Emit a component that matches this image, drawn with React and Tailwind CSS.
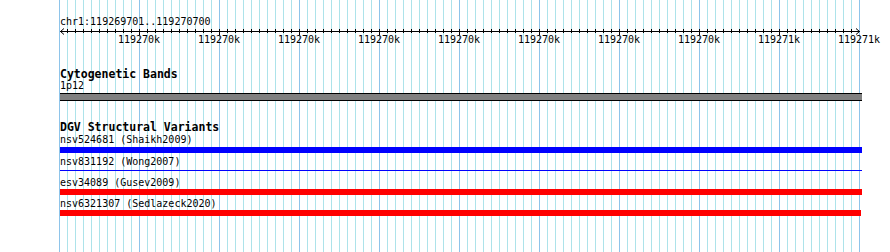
import React from "react";

const MINOR = "#ade3ea";
const MAJOR = "#8ec4ea";

function Grid() {
  const lines = [];
  for (let i = 0; i <= 100; i++) {
    const x = 59 + i * 8;
    const major = i % 10 === 0;
    lines.push(
      <rect key={i} x={x} y={0} width={1} height={252} fill={major ? MAJOR : MINOR} />
    );
  }
  return (
    <svg
      className="absolute left-0 top-0"
      width={890}
      height={252}
      shapeRendering="crispEdges"
    >
      {lines}
    </svg>
  );
}

function Ruler() {
  const ticks = [];
  for (let i = 1; i < 100; i++) {
    const x = i * 8;
    const major = i % 10 === 0;
    ticks.push(
      <rect key={i} x={x} y={2} width={1} height={major ? 6 : 4} fill="#000" />
    );
  }
  return (
    <svg width={802} height={8} shapeRendering="crispEdges" className="block">
      <rect x={1} y={4} width={800} height={1} fill="#000" />
      <polyline points="5,1.5 1.5,4.5 5,7.5" fill="none" stroke="#000" shapeRendering="auto" />
      <polyline points="797,1.5 800.5,4.5 797,7.5" fill="none" stroke="#000" shapeRendering="auto" />
      {ticks}
    </svg>
  );
}

const labels = [
  "119270k",
  "119270k",
  "119270k",
  "119270k",
  "119270k",
  "119270k",
  "119270k",
  "119270k",
  "119271k",
  "119271k",
];

function Label({ children, className = "" }) {
  return (
    <div className={"text-[10px] leading-[11px] h-[11px] whitespace-nowrap " + className}>
      {children}
    </div>
  );
}

function Title({ children, className = "" }) {
  return (
    <div className={"text-[11.5px] leading-[12px] h-[12px] font-bold whitespace-nowrap " + className}>
      {children}
    </div>
  );
}

export default function App() {
  return (
    <div
      className="relative w-[890px] h-[252px] overflow-hidden bg-white text-black"
      style={{ fontFamily: '"DejaVu Sans Mono", monospace' }}
    >
      <Grid />
      <div className="relative flex flex-col">
        <div className="pl-[60px] pt-[16px]">
          <Label>chr1:119269701..119270700</Label>
        </div>
        <div className="pl-[59px]">
          <Ruler />
        </div>
        <div className="flex ml-[99px] mt-[-1px]">
          {labels.map((l, i) => (
            <div key={i} className="w-[80px] shrink-0 text-center text-[10px] leading-[11px] h-[11px]">
              {l}
            </div>
          ))}
        </div>
        <div className="pl-[60px] flex flex-col">
          <Title className="mt-[23px]">Cytogenetic Bands</Title>
          <Label>1p12</Label>
          <div className="mt-[2px] h-[8px] w-[802px] border-y border-black bg-[#808080]" />
          <Title className="mt-[20px]">DGV Structural Variants</Title>
          <Label className="mt-[1px]">nsv524681 (Shaikh2009)</Label>
          <div className="mt-[2px] h-[6px] w-[802px] bg-[#0000ff]" />
          <Label className="mt-[3px]">nsv831192 (Wong2007)</Label>
          <div className="mt-[3px] h-[1px] w-[802px] bg-[#0000ff]" />
          <Label className="mt-[6px]">esv34089 (Gusev2009)</Label>
          <div className="mt-[1px] h-[6px] w-[802px] bg-[#ff0000]" />
          <Label className="mt-[3px]">nsv6321307 (Sedlazeck2020)</Label>
          <div className="mt-[1px] h-[6px] w-[801px] bg-[#ff0000]" />
        </div>
      </div>
    </div>
  );
}
